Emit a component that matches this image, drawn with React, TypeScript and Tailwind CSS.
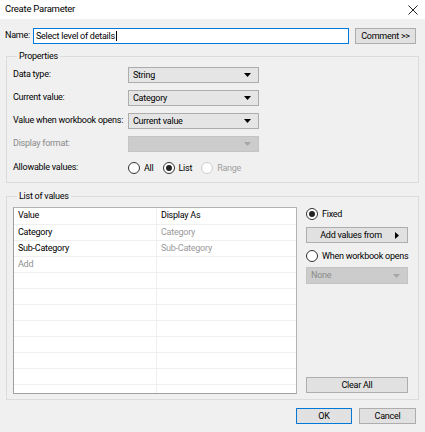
import React from 'react';

const Caret = ({ disabled, right }: { disabled?: boolean; right?: boolean }) =>
  right ? (
    <svg width="4" height="7" viewBox="0 0 4 7">
      <path d="M0 0L4 3.5L0 7z" fill="#000" />
    </svg>
  ) : (
    <svg width="7" height="4" viewBox="0 0 7 4">
      <path d="M0 0h7L3.5 4z" fill={disabled ? '#a6a6a6' : '#000'} />
    </svg>
  );

const Dropdown = ({ value, disabled, className = '' }: { value?: string; disabled?: boolean; className?: string }) => (
  <div
    className={`flex items-center justify-between border pl-1 pr-[7px] ${
      disabled ? 'border-[#c4c4c4] bg-[#cccccc] text-[#8a8a8a]' : 'border-[#adadad] bg-[#e5e5e5] text-black'
    } ${className}`}
  >
    <span className="leading-none">{value}</span>
    <Caret disabled={disabled} />
  </div>
);

const Radio = ({ checked, disabled, label }: { checked?: boolean; disabled?: boolean; label: string }) => (
  <div className={`flex items-center gap-1 whitespace-nowrap ${disabled ? 'text-[#a0a0a0]' : 'text-black'}`}>
    <span
      className={`flex h-3 w-3 shrink-0 items-center justify-center rounded-full border bg-white ${
        disabled ? 'border-[#cccccc]' : 'border-[#333333]'
      }`}
    >
      {checked && <span className="h-[6px] w-[6px] rounded-full bg-[#222]" />}
    </span>
    <span className="leading-none">{label}</span>
  </div>
);

const Button = ({ children, className = '' }: { children: React.ReactNode; className?: string }) => (
  <div className={`flex items-center justify-center whitespace-nowrap border bg-[#e1e1e1] leading-none ${className}`}>
    {children}
  </div>
);

const rows = [
  ['Value', 'Display As', false],
  ['Category', 'Category', true],
  ['Sub-Category', 'Sub-Category', true],
  ['Add', '', true],
];

export default function App() {
  const empty = Array.from({ length: 8 });

  return (
    <div className="h-[432px] w-[425px] overflow-hidden bg-[#f0f0f0] font-['Roboto',sans-serif] text-[9px] tracking-[-0.25px] text-black">
      <div className="flex h-[19px] items-center justify-between bg-white pl-[5px] pr-[7px]">
        <span className="text-[9.5px]">Create Parameter</span>
        <svg width="10" height="10" viewBox="0 0 10 10">
          <path d="M0.5 0.5L9.5 9.5M9.5 0.5L0.5 9.5" stroke="#222" strokeWidth="1" />
        </svg>
      </div>

      <div className="mt-[9px] flex h-4 items-center pl-[5px]">
        <span className="w-[28px]">Name:</span>
        <div className="flex h-4 w-[316px] items-center border border-[#0078d7] bg-white pl-[2px]">
          <span className="leading-none">Select level of details</span>
          <span className="ml-px h-[10px] w-px bg-black" />
        </div>
        <Button className="ml-[6px] h-4 w-[61px] border-[#adadad]">Comment &gt;&gt;</Button>
      </div>

      <fieldset className="mx-[6px] mt-[5px] h-[134px] border border-[#dcdcdc] pl-[6px] pt-[4px]">
        <legend className="ml-[4px] px-[2px] leading-[14px]">Properties</legend>
        <div className="grid grid-cols-[115px_131px] items-center gap-y-[7px] whitespace-nowrap">
          <span>Data type:</span>
          <Dropdown value="String" className="h-4" />
          <span>Current value:</span>
          <Dropdown value="Category" className="h-4" />
          <span>Value when workbook opens:</span>
          <Dropdown value="Current value" className="h-4" />
          <span className="text-[#8a8a8a]">Display format:</span>
          <Dropdown disabled className="h-4" />
        </div>
        <div className="mt-[8px] flex h-4 items-center">
          <span className="w-[115px]">Allowable values:</span>
          <div className="flex items-center gap-[9px]">
            <Radio label="All" />
            <Radio checked label="List" />
            <Radio disabled label="Range" />
          </div>
        </div>
      </fieldset>

      <fieldset className="mx-[6px] mt-[6px] h-[211px] border border-[#dcdcdc] pl-[6px] pt-[4px]">
        <legend className="ml-[4px] px-[2px] leading-[14px]">List of values</legend>
        <div className="flex">
          <div className="h-[187px] w-[284px] overflow-hidden border border-[#b4b4b4] border-l-[#a0a0a0] border-b-[#a0a0a0] bg-white">
            {rows.map(([v, d, dim], i) => (
              <div key={i} className={`flex border-b border-[#efefef] ${i === 0 ? 'h-[17px]' : 'h-4'}`}>
                <div className={`flex w-[143px] items-center border-r border-[#efefef] pl-[4px] ${v === 'Add' ? 'text-[#909090]' : ''}`}>
                  {v as string}
                </div>
                <div className={`flex items-center pl-[4px] ${dim ? 'text-[#9a9a9a]' : ''}`}>{d as string}</div>
              </div>
            ))}
            {empty.map((_, i) => (
              <div key={i} className="flex h-4 border-b border-[#efefef]">
                <div className="w-[143px] border-r border-[#efefef]" />
              </div>
            ))}
            <div className="flex h-4">
              <div className="w-[143px] border-r border-[#efefef]" />
            </div>
          </div>

          <div className="ml-[9px] flex w-[102px] flex-col">
            <div className="mt-px">
              <Radio checked label="Fixed" />
            </div>
            <Button className="mt-[7px] h-4 w-[102px] border-[#adadad]">
              <span className="flex-1 text-center">Add values from</span>
              <span className="mr-[8px]">
                <Caret right />
              </span>
            </Button>
            <div className="mt-[7px]">
              <Radio label="When workbook opens" />
            </div>
            <Dropdown disabled value="None" className="mt-[5px] h-[17px] w-[102px]" />
            <Button className="mt-[93px] h-4 w-[102px] border-[#adadad]">Clear All</Button>
          </div>
        </div>
      </fieldset>

      <div className="mt-[8px] flex justify-end gap-[7px] pr-[9px]">
        <Button className="h-4 w-[56px] border-[#0078d7]">OK</Button>
        <Button className="h-4 w-[57px] border-[#adadad]">Cancel</Button>
      </div>
    </div>
  );
}
